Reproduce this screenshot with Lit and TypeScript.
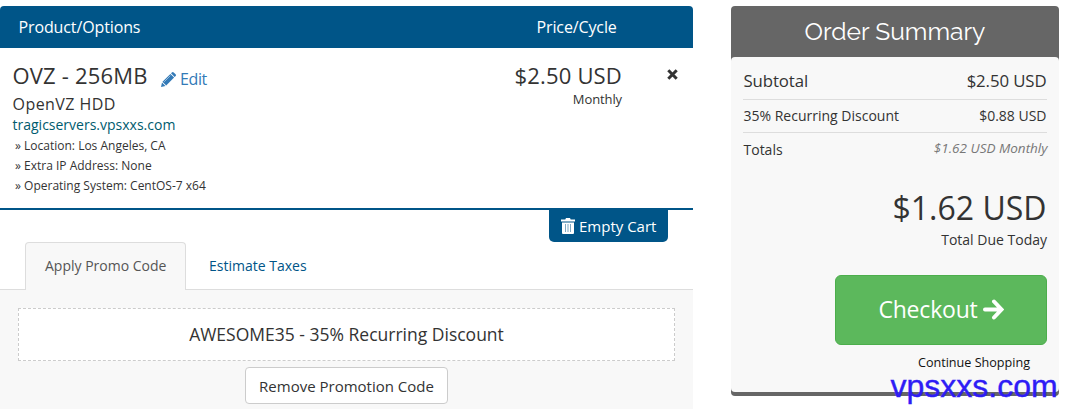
import { LitElement, html, css } from "lit";
import { customElement } from "lit/decorators.js";

@customElement("order-cart")
class OrderCart extends LitElement {
  static styles = css`
    :host { display: flex; flex-direction: column; width: 693px; height: 409px; white-space: nowrap; }
    * { box-sizing: border-box; }
    .head { display: flex; margin-top: 6px; height: 42px; line-height: 42px; padding-left: 18.500px;
      background: #058; color: #fff; font-size: 16px; letter-spacing: -.12px; border-radius: 4px 4px 0 0; }
    .head .product { width: 518px; }
    .item { display: flex; height: 162px; padding: 12px 0 0 12.500px; border-bottom: 2px solid #058; }
    .details { width: 409px; }
    .title { display: flex; height: 32px; line-height: 31px; font-size: 22px; }
    .name, .amount { letter-spacing: .18px; }
    .edit { display: flex; margin-left: 13.500px; color: #337ab7; font-size: 16px; letter-spacing: -.4px; line-height: 39px; }
    .edit svg { width: 15px; height: 15px; margin: 12px 4px 0 0; }
    .group { height: 23px; line-height: 25px; font-size: 16px; letter-spacing: .45px; }
    .domain { height: 21px; line-height: 20px; font-size: 14px; color: #005b6e; }
    .option { height: 20px; line-height: 20px; font-size: 12px; padding-left: 2.500px; }
    .cost { width: 200.500px; text-align: right; }
    .amount { height: 31px; line-height: 31px; font-size: 22px; }
    .cycle { height: 18px; line-height: 17px; font-size: 13px; letter-spacing: -.1px; }
    .remove { width: 11px; height: 11px; margin: 9px 0 0 45px; }
    .empty { align-self: flex-end; display: flex; align-items: center; width: 119px; height: 32px; margin-right: 25px;
      padding-left: 12px; background: #058; color: #fff; font-size: 15px; border-radius: 0 0 5px 5px; }
    .empty svg { width: 14px; height: 16px; margin-right: 4px; }
    .tabs { display: flex; height: 48px; padding-left: 25px; border-bottom: 1px solid #ddd; line-height: 48px; font-size: 14px; }
    .tab { height: 48px; padding: 0 23px; color: #058; }
    .tab.active { width: 161px; padding: 0 0 0 19px; color: #555; background: #f8f8f8; line-height: 46px;
      border: 1px solid #ddd; border-bottom: 0; border-radius: 4px 4px 0 0; }
    .promo { flex: 1; display: flex; flex-direction: column; align-items: center; background: #f8f8f8; padding-top: 18px; }
    .code { width: 657px; height: 53px; line-height: 51px; text-align: center; font-size: 17.500px; background: #fff; border: 1px dashed #ccc; }
    .drop { width: 203px; height: 37px; margin-top: 6px; line-height: 37px; text-align: center; font-size: 15px;
      background: #fff; border: 1px solid #ccc; border-radius: 4px; }
  `;
  options = ["Location: Los Angeles, CA", "Extra IP Address: None", "Operating System: CentOS-7 x64"];
  render() {
    return html`
      <div class="head"><span class="product">Product/Options</span><span class="price">Price/Cycle</span></div>
      <div class="item">
        <div class="details">
          <div class="title"><span class="name">OVZ - 256MB</span>
            <span class="edit"><svg viewBox="0 0 15 15" fill="#337ab7"><path d="M0 15 1 10.500 4.500 14zM1.500 9.800 9.400 1.900l3.700 3.700-7.900 7.900zM10 1.300l.9-.9q.9-.8 1.800 0l1.900 1.900q.8.9 0 1.800l-.9.9z"/><path d="M3.200 9.800 9.400 3.600" stroke="#fff" stroke-width=".5"/></svg><span class="edit-label">Edit</span></span>
          </div>
          <div class="group">OpenVZ HDD</div>
          <div class="domain">tragicservers.vpsxxs.com</div>
          ${this.options.map((o) => html`<div class="option">» ${o}</div>`)}
        </div>
        <div class="cost"><div class="amount">$2.50 USD</div><div class="cycle">Monthly</div></div>
        <svg class="remove" viewBox="0 0 11 11"><path d="M1.300 1.300 9.700 9.700M9.700 1.300 1.300 9.700" stroke="#333" stroke-width="3"/></svg>
      </div>
      <div class="empty"><svg viewBox="0 0 14 16" fill="#fff"><path d="M5 0h4l.7 1.400H14V3.500H0V1.400h4.300zM1 4.500h12V15q0 1-1 1H2q-1 0-1-1z"/><path d="M4.500 6v8M7 6v8M9.500 6v8" stroke="#058" stroke-width=".5"/></svg><span class="empty-label">Empty Cart</span></div>
      <div class="tabs"><div class="tab active">Apply Promo Code</div><div class="tab">Estimate Taxes</div></div>
      <div class="promo"><div class="code">AWESOME35 - 35% Recurring Discount</div><div class="drop">Remove Promotion Code</div></div>
    `;
  }
}

@customElement("order-summary")
class OrderSummary extends LitElement {
  static styles = css`
    :host { display: block; width: 328px; height: 390px; margin-top: 6px; background: #666; border-radius: 4px; white-space: nowrap; }
    * { box-sizing: border-box; }
    .heading { height: 51px; line-height: 51px; text-align: center; color: #fff; font-family: Raleway, Lato, sans-serif; font-size: 24.600px; }
    .body { display: flex; flex-direction: column; height: 335px; padding: 5px 12px 0; background: #f8f8f8; border-radius: 4px; }
    .row { display: flex; justify-content: space-between; padding: 0 .5px; font-size: 14px; }
    .row.subtotal { height: 38px; line-height: 38px; font-size: 16.800px; letter-spacing: -.1px; border-bottom: 1px solid #ddd; }
    .row.discount { height: 33px; line-height: 31px; border-bottom: 1px solid #ddd; }
    .row.totals { height: 33px; line-height: 33px; padding-right: 0; }
    .recurring { font-size: 13.500px; font-style: italic; color: #777; line-height: 30px; margin-right: -.5px; }
    .due { height: 47px; margin-top: 17px; line-height: 50px; text-align: right; padding-right: .5px; font-size: 32px; }
    .due-label { height: 20px; line-height: 20px; text-align: right; font-size: 14px; }
    .checkout { align-self: flex-end; display: flex; align-items: center; justify-content: center; width: 212px; height: 70px;
      margin-top: 25px; color: #fff; background: #5cb85c; border: 1px solid #4cae4c; border-radius: 6px; font-size: 23px; letter-spacing: -.2px; }
    .checkout-label { margin-top: -3px; }
    .checkout svg { width: 21px; height: 21px; margin: -1px 0 0 5px; }
    .continue { align-self: flex-end; margin: 10px 17px 0 0; line-height: 16px; font-size: 12.600px; color: #111; }
  `;
  render() {
    return html`
      <div class="heading"><span class="heading-text">Order Summary</span></div>
      <div class="body">
        <div class="row subtotal"><span class="s1">Subtotal</span><span class="s2">$2.50 USD</span></div>
        <div class="row discount"><span>35% Recurring Discount</span><span>$0.88 USD</span></div>
        <div class="row totals"><span>Totals</span><span class="recurring">$1.62 USD Monthly</span></div>
        <div class="due">$1.62 USD</div>
        <div class="due-label">Total Due Today</div>
        <div class="checkout"><span class="checkout-label">Checkout</span><svg viewBox="0 0 21 21" fill="none" stroke="#fff" stroke-width="4" stroke-linecap="round"><path d="M2 10.500H17M11 2.500l7.500 8-7.500 8"/></svg></div>
        <div class="continue">Continue Shopping</div>
      </div>
    `;
  }
}

@customElement("app-root")
class AppRoot extends LitElement {
  static styles = css`
    :host { display: block; position: relative; width: 1066px; height: 409px; overflow: hidden; background: #fff; color: #333;
      font-family: "Open Sans", sans-serif; }
    .page { display: flex; gap: 38px; align-items: flex-start; }
    .watermark { position: absolute; left: 890.500px; top: 375px; font: 32px/22px "Liberation Sans", Arial, sans-serif; color: #2e1cf5; -webkit-text-stroke: .4px #2e1cf5; }
  `;
  render() {
    return html`<div class="page"><order-cart></order-cart><order-summary></order-summary></div><div class="watermark">vpsxxs.com</div>`;
  }
}
